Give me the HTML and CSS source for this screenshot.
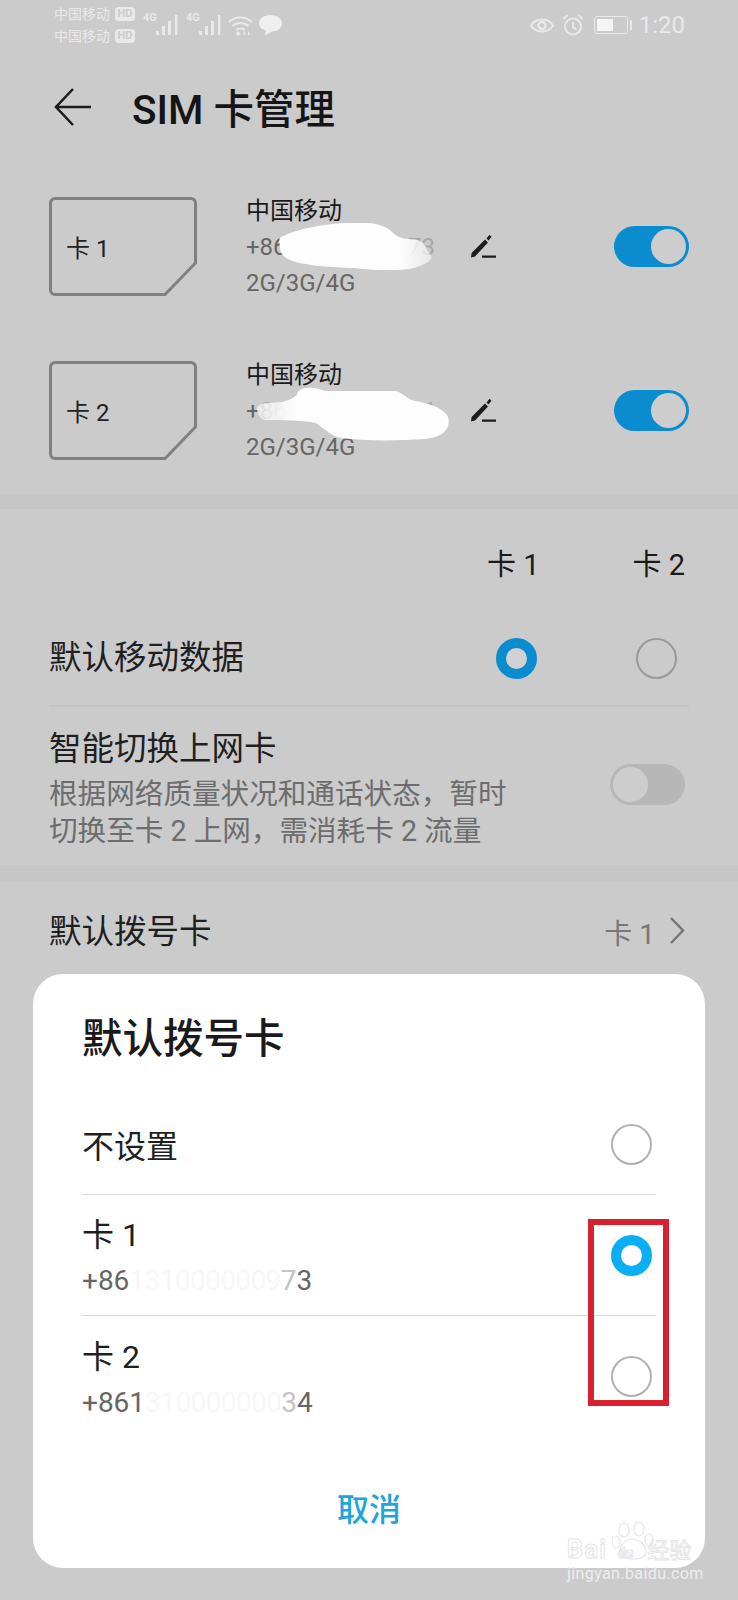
FILE: index.html
```html
<!DOCTYPE html>
<html lang="zh-CN">
  <head>
    <meta charset="UTF-8" />
    <meta name="viewport" content="width=device-width, initial-scale=1.0" />
    <title>SIM 卡管理</title>
    <link rel="stylesheet" href="styles.css">
  </head>
  <body>
    <div class="screen">
      <!-- status bar -->
      <div class="status-bar">
        <div class="status-left">
          <div class="carriers">
            <div class="carrier">中国移动<span class="hd">HD</span></div>
            <div class="carrier">中国移动<span class="hd">HD</span></div>
          </div>
          <span class="net">4G</span>
          <svg class="signal" width="22" height="22" viewBox="0 0 22 22" fill="#e9e9e9">
            <rect x="0" y="17" width="3" height="4" />
            <rect x="6" y="12" width="3" height="9" />
            <rect x="12" y="7" width="3" height="14" />
            <rect x="19" y="1" width="2.4" height="20" />
          </svg>
          <span class="net">4G</span>
          <svg class="signal" width="22" height="22" viewBox="0 0 22 22" fill="#e9e9e9">
            <rect x="0" y="17" width="3" height="4" />
            <rect x="6" y="12" width="3" height="9" />
            <rect x="12" y="7" width="3" height="14" />
            <rect x="19" y="1" width="2.4" height="20" />
          </svg>
          <svg class="wifi" width="25" height="21" viewBox="0 0 25 21" fill="none" stroke="#e9e9e9" stroke-width="2">
            <path d="M1 7c6.500-6 16.500-6 23 0" />
            <path d="M4.500 11c4.500-4 11.500-4 16 0" />
            <path d="M8 15c2.500-2 6.500-2 9 0" />
            <circle cx="10" cy="18.500" r="2" fill="#e9e9e9" stroke="none" />
            <path d="M17 16v5l-2-2.500zM20 16v5l2-2.500z" fill="#e9e9e9" stroke="none" />
          </svg>
          <svg class="bubble" width="23" height="20" viewBox="0 0 23 20" fill="#efefef">
            <path d="M11.500 0C18 0 23 3.500 23 8.500S18 16.500 12.500 16.500C10.500 18.500 8 19.500 5.500 20 6.500 18.500 7 17 7 15.500 3 14.500 0 12 0 8.500 0 3.500 5 0 11.500 0z" />
          </svg>
        </div>
        <div class="status-right">
          <svg width="24" height="17" viewBox="0 0 24 17" fill="none" stroke="#e9e9e9" stroke-width="2">
            <path d="M1 8.500C6 .5 18 .5 23 8.500 18 16.500 6 16.500 1 8.500z" />
            <circle cx="12" cy="8.500" r="3.500" stroke-width="2.500" />
          </svg>
          <svg class="alarm" width="22" height="22" viewBox="0 0 22 22" fill="none" stroke="#e9e9e9" stroke-width="2">
            <circle cx="11" cy="12.500" r="8" />
            <path d="M11 8v5l3.500 2.500M1.500 5l4-4M20.500 5l-4-4" />
          </svg>
          <div class="battery"><div class="battery-level"></div></div>
          <div class="battery-nub"></div>
          <span class="clock">1:20</span>
        </div>
      </div>

      <!-- title -->
      <div class="app-bar">
        <svg width="37" height="38" viewBox="0 0 37 38" fill="none" stroke="#1a1a1a" stroke-width="2.500">
          <path d="M19 1L2 19l17 18M2 19h35" />
        </svg>
        <h1 class="page-title">SIM 卡管理</h1>
      </div>

      <!-- sim cards -->
      <div class="sim-list">
        <div class="sim-row">
          <div class="sim-card">
            <svg class="sim-shape" width="148" height="99" viewBox="0 0 148 99" fill="none" stroke="#808080" stroke-width="3">
              <path d="M6 1.500H142a4.500 4.500 0 0 1 4.500 4.500V66L116 97.500H6A4.500 4.500 0 0 1 1.500 93V6A4.500 4.500 0 0 1 6 1.500z" />
            </svg>
            <span class="sim-label">卡 1</span>
          </div>
          <div class="sim-info">
            <div class="sim-name">中国移动</div>
            <div class="sim-number">+86<span class="faint">131000000</span><span class="faint-end">73</span></div>
            <div class="sim-type">2G/3G/4G</div>
            <svg class="smudge smudge-one" width="156" height="47" viewBox="0 0 156 47">
              <defs>
                <linearGradient id="fadeRight">
                  <stop offset="0.8" stop-color="#fdfdfd" />
                  <stop offset="1" stop-color="#fdfdfd" stop-opacity="0.55" />
                </linearGradient>
              </defs>
              <path fill="url(#fadeRight)" d="M4 14C20 6 45 1 70 0c20-1 35 0 44 8 5 5 10 8 18 8 10 0 14 3 17 9 3 6 7 8 5 11-4 5-12 8-22 10-20 2-38 1-55-1-18-1-36-1-48-4C6 38 3 30 3 24c0-4-2-7 1-10z" />
            </svg>
          </div>
          <svg class="pencil" width="26" height="24" viewBox="0 0 26 24" fill="#1c1c1c">
            <path d="M1 23.500l.6-4.500L15 5.500l3 3L5 22.500zM18.500 6.500l-2-2L19.500.8l2 2zM12 21.500h14v2.200H12z" />
          </svg>
          <div class="toggle on"><div class="knob"></div></div>
        </div>
        <div class="sim-row">
          <div class="sim-card">
            <svg class="sim-shape" width="148" height="99" viewBox="0 0 148 99" fill="none" stroke="#808080" stroke-width="3">
              <path d="M6 1.500H142a4.500 4.500 0 0 1 4.500 4.500V66L116 97.500H6A4.500 4.500 0 0 1 1.500 93V6A4.500 4.500 0 0 1 6 1.500z" />
            </svg>
            <span class="sim-label">卡 2</span>
          </div>
          <div class="sim-info">
            <div class="sim-name">中国移动</div>
            <div class="sim-number">+<span class="faint-end">861</span><span class="faint">31000000</span><span class="faint-end">84</span></div>
            <div class="sim-type">2G/3G/4G</div>
            <svg class="smudge smudge-two" width="192" height="54" viewBox="0 0 192 54">
              <defs>
                <linearGradient id="fadeBoth">
                  <stop offset="0" stop-color="#fdfdfd" stop-opacity="0.6" />
                  <stop offset="0.2" stop-color="#fdfdfd" />
                </linearGradient>
              </defs>
              <path fill="url(#fadeBoth)" d="M40 8c0-6 10-9 22-6 4 1 6 2 8 2h66c10 0 12 8 22 10 12 2 26 6 32 14 3 5 2 12-2 16-4 5-12 7-20 8-30 2-60 2-85-1-10-3-14-8-24-15-15-3-35-3-50-3-5 0-8-6-9-9-1-4 3-8 10-8 10 0 22-1 30-8z" />
            </svg>
          </div>
          <svg class="pencil" width="26" height="24" viewBox="0 0 26 24" fill="#1c1c1c">
            <path d="M1 23.500l.6-4.500L15 5.500l3 3L5 22.500zM18.500 6.500l-2-2L19.500.8l2 2zM12 21.500h14v2.200H12z" />
          </svg>
          <div class="toggle on"><div class="knob"></div></div>
        </div>
      </div>

      <div class="band"></div>

      <!-- default data -->
      <div class="data-section">
        <div class="col-head">
          <span>卡 1</span>
          <span>卡 2</span>
        </div>
        <div class="data-row">
          <span class="row-title">默认移动数据</span>
          <div class="radio-pair">
            <div class="radio checked"></div>
            <div class="radio"></div>
          </div>
        </div>
        <div class="smart-row">
          <div class="smart-text">
            <div class="row-title">智能切换上网卡</div>
            <div class="row-note">根据网络质量状况和通话状态，暂时</div>
            <div class="row-note">切换至卡 2 上网，需消耗卡 2 流量</div>
          </div>
          <div class="toggle off"><div class="knob"></div></div>
        </div>
      </div>

      <div class="band band-two"></div>

      <div class="dial-row">
        <span class="row-title">默认拨号卡</span>
        <span class="dial-value">卡 1</span>
        <svg width="16" height="27" viewBox="0 0 16 27" fill="none" stroke="#777" stroke-width="2.500">
          <path d="M2 1l12 12.500L2 26" />
        </svg>
      </div>

      <!-- dialog -->
      <div class="dialog">
        <div class="dialog-title">默认拨号卡</div>
        <div class="option option-plain">
          <div class="option-text">
            <div class="option-name">不设置</div>
          </div>
          <div class="radio on-white"></div>
        </div>
        <div class="option">
          <div class="option-text">
            <div class="option-name">卡 1</div>
            <div class="option-number">+86<span class="faint-white">1310000009</span><span class="faint-mid">7</span>3</div>
          </div>
          <div class="radio on-white checked-bright"></div>
        </div>
        <div class="option option-last">
          <div class="option-text">
            <div class="option-name">卡 2</div>
            <div class="option-number">+861<span class="faint-white">310000000</span><span class="faint-mid">3</span>4</div>
          </div>
          <div class="radio on-white"></div>
        </div>
        <div class="dialog-action">取消</div>
        <div class="red-box"></div>
      </div>

      <!-- watermark -->
      <div class="watermark">
        <svg class="paw" width="42" height="42" viewBox="0 0 42 42" fill="none" stroke="#e6e6e6" stroke-width="1.200">
          <ellipse cx="12" cy="10" rx="5" ry="7" />
          <ellipse cx="27" cy="9" rx="5" ry="7" />
          <ellipse cx="37" cy="20" rx="4" ry="6" />
          <ellipse cx="4" cy="22" rx="4" ry="6" />
          <path d="M8 32c0-8 6-13 12-13s14 5 14 13c0 6-8 7-13 7S8 38 8 32z" />
        </svg>
        <div class="wm-main">Bai<span class="wm-du">du</span><span class="wm-cn">经验</span></div>
        <div class="wm-url">jingyan.baidu.com</div>
      </div>
    </div>
  </body>
</html>
```

FILE: styles.css
```css
body {
  margin: 0;
  background-color: #cbcbcb;
  font-family: Roboto, "Noto Sans CJK SC", sans-serif;
}
.screen {
  position: relative;
  width: 738px;
  height: 1600px;
  overflow: hidden;
  background-color: #cbcbcb;
}

/* status bar */
.status-bar {
  display: flex;
  justify-content: space-between;
  align-items: center;
  height: 50px;
  padding: 0 53px 0 54px;
  box-sizing: border-box;
  color: #e9e9e9;
}
.status-left,
.status-right {
  display: flex;
  align-items: center;
}
.carrier {
  display: flex;
  align-items: center;
  height: 22px;
  font-size: 14px;
  line-height: 22px;
}
.hd {
  width: 20px;
  height: 14px;
  margin-left: 5px;
  border-radius: 4px;
  background-color: #e9e9e9;
  color: #cbcbcb;
  font-size: 11px;
  font-weight: 700;
  line-height: 14px;
  text-align: center;
}
.net {
  align-self: flex-start;
  width: 13px;
  margin: 9px 0 0 8px;
  font-size: 11px;
  font-weight: 700;
  line-height: 12px;
}
.wifi {
  margin: 0 0 0 7px;
}
.bubble {
  margin-left: 6px;
}
.alarm {
  margin-left: 8px;
}
.battery {
  width: 34px;
  height: 18px;
  margin-left: 10px;
  padding: 2px;
  border: 1px solid #e9e9e9;
  border-radius: 3px;
  box-sizing: border-box;
}
.battery-level {
  width: 16px;
  height: 12px;
  background-color: #f4f4f4;
}
.battery-nub {
  width: 2px;
  height: 10px;
  margin-left: 2px;
  background-color: #e9e9e9;
}
.clock {
  margin-left: 7px;
  font-size: 24px;
  line-height: 30px;
}

/* app bar */
.app-bar {
  display: flex;
  align-items: center;
  height: 114px;
  padding-left: 54px;
}
.page-title {
  margin: 0 0 2px 41px;
  color: #151515;
  font-size: 40.500px;
  font-weight: 500;
}

/* sim list */
.sim-list {
  display: flex;
  flex-direction: column;
  gap: 66px;
  padding: 33px 49px 35px;
}
.sim-row {
  display: flex;
  align-items: center;
  height: 98px;
}
.sim-card {
  display: flex;
  align-items: center;
  position: relative;
  width: 148px;
  height: 98px;
}
.sim-shape {
  position: absolute;
  top: 0;
  left: 0;
}
.sim-label {
  margin-left: 17px;
  color: #222;
  font-size: 24px;
}
.sim-info {
  position: relative;
  width: 223px;
  margin: 2px 0 0 49px;
}
.sim-name {
  color: #1a1a1a;
  font-size: 24px;
  line-height: 36px;
}
.sim-number,
.sim-type {
  color: #666;
  font-size: 24px;
  line-height: 36px;
  white-space: nowrap;
}
.faint {
  color: #d6d6d6;
}
.faint-end {
  color: #a8a8a8;
}
.smudge {
  position: absolute;
}
.smudge-one {
  top: 30px;
  left: 31px;
}
.smudge-two {
  top: 30px;
  left: 11px;
}
.pencil {
  flex-shrink: 0;
  margin-left: 1px;
}
.toggle {
  display: flex;
  align-items: center;
  width: 75px;
  height: 41px;
  padding: 0 3px;
  margin-left: auto;
  border-radius: 21px;
  box-sizing: border-box;
}
.toggle.on {
  justify-content: flex-end;
  background-color: #0a8ccf;
}
.toggle.off {
  margin: 0 4px 4px auto;
  background-color: #b7b7b7;
}
.knob {
  width: 35px;
  height: 35px;
  border-radius: 50%;
  background-color: #cdcdcd;
}

.band {
  height: 15px;
  background-color: #c6c6c6;
}
.band-two {
  height: 17px;
}

/* default data */
.data-section {
  height: 356px;
  padding: 0 49px;
}
.col-head {
  display: flex;
  justify-content: flex-end;
  gap: 93px;
  height: 112px;
  padding: 0 4px 0 0;
  box-sizing: border-box;
  color: #1a1a1a;
  font-size: 29px;
  line-height: 112px;
}
.data-row {
  display: flex;
  justify-content: space-between;
  align-items: center;
  height: 86px;
  padding: 0 12px 10px 0;
  border-bottom: 2px solid #c3c3c3;
  box-sizing: border-box;
}
.row-title {
  color: #1f1f1f;
  font-size: 32.500px;
  line-height: 44px;
}
.radio-pair {
  display: flex;
  gap: 99px;
}
.radio {
  width: 41px;
  height: 41px;
  border: 2px solid #999;
  border-radius: 50%;
  box-sizing: border-box;
}
.radio.checked {
  border: 10px solid #0a8ccf;
  background-color: #d2d2d2;
}
.smart-row {
  display: flex;
  justify-content: space-between;
  align-items: center;
  height: 158px;
}
.smart-text {
  padding-top: 5px;
}
.smart-text .row-title {
  margin-bottom: 5px;
}
.row-note {
  color: #6d6d6d;
  font-size: 28.600px;
  line-height: 37px;
}

.dial-row {
  display: flex;
  align-items: center;
  height: 100px;
  padding: 0 53px 0 49px;
}
.dial-value {
  margin-left: auto;
  color: #777;
  font-size: 28px;
}
.dial-row svg {
  margin: 0 0 4px 14px;
}

/* dialog */
.dialog {
  position: absolute;
  top: 974px;
  left: 33px;
  width: 672px;
  height: 594px;
  padding: 0 49px;
  border-radius: 30px;
  box-sizing: border-box;
  background-color: #fff;
}
.dialog-title {
  height: 120px;
  padding-top: 8px;
  box-sizing: border-box;
  color: #1a1a1a;
  font-size: 40.500px;
  font-weight: 500;
  line-height: 114px;
}
.option {
  display: flex;
  justify-content: space-between;
  align-items: center;
  height: 121px;
  padding-right: 4px;
  border-bottom: 1px solid #d9d9d9;
  box-sizing: border-box;
}
.option-plain {
  height: 101px;
}
.option-last {
  border-bottom: none;
}
.option-text {
  padding-top: 6px;
}
.option-name {
  color: #1f1f1f;
  font-size: 32px;
  line-height: 46px;
}
.option-number {
  color: #666;
  font-size: 28px;
  line-height: 46px;
}
.faint-white {
  color: #f7f7f7;
  letter-spacing: -0.6px;
}
.faint-mid {
  color: #c4c4c4;
}
.on-white {
  border-color: #b0b0b0;
}
.radio.checked-bright {
  border: 10px solid #0aaef5;
  background-color: #fff;
}
.dialog-action {
  padding-top: 16px;
  color: #1ea5dc;
  font-size: 32px;
  font-weight: 500;
  line-height: 115px;
  text-align: center;
}
.red-box {
  position: absolute;
  top: 245px;
  left: 555px;
  width: 81px;
  height: 187px;
  border: 6px solid #d9202e;
  box-sizing: border-box;
}

/* watermark */
.watermark {
  position: absolute;
  top: 1520px;
  left: 567px;
  width: 134px;
  height: 70px;
}
.paw {
  position: absolute;
  top: 0;
  left: 45px;
}
.wm-main {
  position: absolute;
  top: 18px;
  left: 0;
  color: transparent;
  font-size: 25px;
  font-weight: 700;
  letter-spacing: 1.500px;
  line-height: 24px;
  white-space: nowrap;
  -webkit-text-stroke: 1px #e6e6e6;
}
.wm-du {
  margin-left: 10px;
  font-size: 14px;
  letter-spacing: 0;
}
.wm-cn {
  margin-left: 14px;
  font-size: 22px;
  font-weight: 400;
  letter-spacing: 0;
}
.wm-url {
  position: absolute;
  top: 47px;
  left: 0;
  color: #eee;
  font-size: 16px;
  letter-spacing: 0.4px;
  line-height: 14px;
  white-space: nowrap;
}
```
